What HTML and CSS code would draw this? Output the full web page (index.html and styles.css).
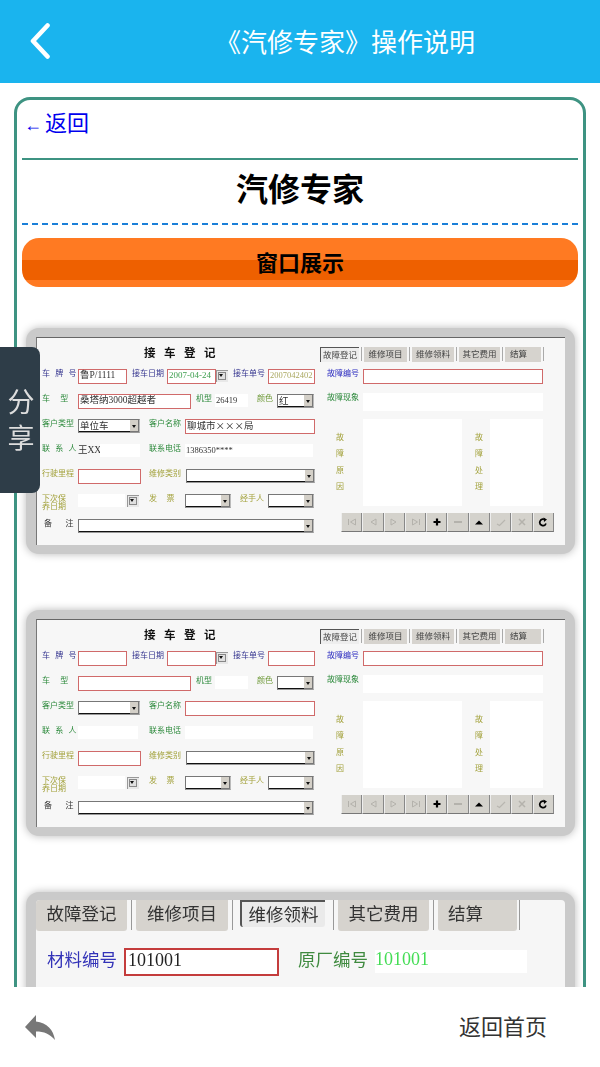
FILE: index.html
```html
<!DOCTYPE html>
<html lang="zh-CN">
<head>
<meta charset="utf-8">
<title>《汽修专家》操作说明</title>
<link rel="stylesheet" href="styles.css">
</head>
<body>
<svg class="defs" width="0" height="0" aria-hidden="true">
  <symbol id="i-first" viewBox="0 0 10 10"><path d="M1.500 2v6M8.500 2L3.500 5l5 3z" fill="none" stroke="#b4b2ac"/></symbol>
  <symbol id="i-prev" viewBox="0 0 10 10"><path d="M8 2L3 5l5 3z" fill="none" stroke="#b4b2ac"/></symbol>
  <symbol id="i-next" viewBox="0 0 10 10"><path d="M2 2l5 3-5 3z" fill="none" stroke="#b4b2ac"/></symbol>
  <symbol id="i-last" viewBox="0 0 10 10"><path d="M8.500 2v6M1.500 2l5 3-5 3z" fill="none" stroke="#b4b2ac"/></symbol>
  <symbol id="i-plus" viewBox="0 0 10 10"><path d="M5 1.500v7M1.500 5h7" stroke="#000" stroke-width="2.200"/></symbol>
  <symbol id="i-minus" viewBox="0 0 10 10"><path d="M1 5h8" stroke="#b4b2ac" stroke-width="2"/></symbol>
  <symbol id="i-up" viewBox="0 0 10 10"><path d="M1 7.500L5 3.500l4 4z" fill="#000"/></symbol>
  <symbol id="i-check" viewBox="0 0 10 10"><path d="M1 7l2.500 1.500L9 3" fill="none" stroke="#b8b6b0" stroke-width="1.200"/></symbol>
  <symbol id="i-x" viewBox="0 0 10 10"><path d="M2 2l6 6M8 2L2 8" stroke="#b4b2ac" stroke-width="1.500"/></symbol>
  <symbol id="i-redo" viewBox="0 0 10 10"><path d="M8 6.500A3.200 3.200 0 1 1 6 2.300" fill="none" stroke="#000" stroke-width="1.700"/><path d="M5.500 .5L9 2.500 6 5z" fill="#000"/></symbol>
</svg>

<div class="app">
  <header class="topbar">
    <svg class="back" viewBox="0 0 20 36" width="20" height="36"><path d="M17.500 2.500L3 18l14.500 15.500" fill="none" stroke="#fff" stroke-width="4.600" stroke-linecap="round" stroke-linejoin="round"/></svg>
    <h1 class="page-title">《汽修专家》操作说明</h1>
  </header>

  <main class="content">
    <div class="card">
      <a class="back-link" href="#"><span class="arrow">←</span>返回</a>
      <h2 class="doc-title">汽修专家</h2>
      <div class="section-btn">窗口展示</div>

      <div class="shot">
        <div class="form">
          <div class="left">
            <div class="form-title">接车登记</div>
            <div class="frow">
              <span class="lab navy w36 ws3">车 牌 号</span>
              <span class="inp w49">鲁P/1111</span>
              <span class="lab navy w40 pl5">接车日期</span>
              <span class="inp w49 val-date">2007-04-24</span>
              <span class="dbtn"><i></i></span>
              <span class="lab navy w40 pl5">接车单号</span>
              <span class="inp w47 val-no">2007042402</span>
            </div>
            <div class="frow">
              <span class="lab green w36 ws8">车 型</span>
              <span class="inp w113">桑塔纳3000超越者</span>
              <span class="lab green w24 pl5">机型</span>
              <span class="box w33">26419</span>
              <span class="lab olive-green w29 pl9">颜色</span>
              <span class="sel w37"><b>红</b><i></i></span>
            </div>
            <div class="frow">
              <span class="lab green w36">客户类型</span>
              <span class="sel w62"><b>单位车</b><i></i></span>
              <span class="lab green w45 pl9">客户名称</span>
              <span class="inp w130 cjk">聊城市×××局</span>
            </div>
            <div class="frow">
              <span class="lab green w36 ws3">联 系 人</span>
              <span class="plain w22">王XX</span>
              <span class="box w40"></span>
              <span class="lab green w45 pl9">联系电话</span>
              <span class="box w128">1386350****</span>
            </div>
            <div class="frow">
              <span class="lab olive w36">行驶里程</span>
              <span class="inp w63"></span>
              <span class="lab olive w45 pl8">维修类别</span>
              <span class="sel w129"><b></b><i></i></span>
            </div>
            <div class="frow">
              <span class="lab olive w36 two">下次保<br>养日期</span>
              <span class="box w47"></span>
              <span class="dbtn gap2"><i></i></span>
              <span class="lab olive w46 pl10 ws7">发 票</span>
              <span class="sel w46"><b></b><i></i></span>
              <span class="lab olive w37 pl9">经手人</span>
              <span class="sel w46"><b></b><i></i></span>
            </div>
            <div class="frow">
              <span class="lab dark w36 pl2 ws11">备 注</span>
              <span class="sel w236"><b></b><i></i></span>
            </div>
          </div>
          <div class="right">
            <div class="tabs">
              <span class="tab tab-on w39">故障登记</span><span class="sep"></span>
              <span class="tab w43">维修项目</span><span class="sep"></span>
              <span class="tab w42">维修领料</span><span class="sep"></span>
              <span class="tab w41">其它费用</span><span class="sep"></span>
              <span class="tab tab-left w36">结算</span><span class="sep"></span>
            </div>
            <div class="rrow">
              <span class="lab blue w43 pl7">故障编号</span>
              <span class="inp w180"></span>
            </div>
            <div class="rrow">
              <span class="lab green w43 pl7">故障现象</span>
              <span class="box w180 h18"></span>
            </div>
            <div class="rrow">
              <span class="vlab w43"><span>故</span><span>障</span><span>原</span><span>因</span></span>
              <span class="box w99 h87"></span>
              <span class="vlab w28 shift"><span>故</span><span>障</span><span>处</span><span>理</span></span>
              <span class="box w53 h87"></span>
            </div>
            <div class="toolbar">
              <span class="tool"><svg width="10" height="10"><use href="#i-first"/></svg></span>
              <span class="tool"><svg width="10" height="10"><use href="#i-prev"/></svg></span>
              <span class="tool"><svg width="10" height="10"><use href="#i-next"/></svg></span>
              <span class="tool"><svg width="10" height="10"><use href="#i-last"/></svg></span>
              <span class="tool"><svg width="10" height="10"><use href="#i-plus"/></svg></span>
              <span class="tool"><svg width="10" height="10"><use href="#i-minus"/></svg></span>
              <span class="tool"><svg width="10" height="10"><use href="#i-up"/></svg></span>
              <span class="tool"><svg width="10" height="10"><use href="#i-check"/></svg></span>
              <span class="tool"><svg width="10" height="10"><use href="#i-x"/></svg></span>
              <span class="tool"><svg width="10" height="10"><use href="#i-redo"/></svg></span>
            </div>
          </div>
        </div>
      </div>

      <div class="shot">
        <div class="form">
          <div class="left">
            <div class="form-title">接车登记</div>
            <div class="frow">
              <span class="lab navy w36 ws3">车 牌 号</span>
              <span class="inp w49"></span>
              <span class="lab navy w40 pl5">接车日期</span>
              <span class="inp w49"></span>
              <span class="dbtn"><i></i></span>
              <span class="lab navy w40 pl5">接车单号</span>
              <span class="inp w47"></span>
            </div>
            <div class="frow">
              <span class="lab green w36 ws8">车 型</span>
              <span class="inp w113"></span>
              <span class="lab green w24 pl5">机型</span>
              <span class="box w33"></span>
              <span class="lab olive-green w29 pl9">颜色</span>
              <span class="sel w37"><b></b><i></i></span>
            </div>
            <div class="frow">
              <span class="lab green w36">客户类型</span>
              <span class="sel w62"><b></b><i></i></span>
              <span class="lab green w45 pl9">客户名称</span>
              <span class="inp w130"></span>
            </div>
            <div class="frow">
              <span class="lab green w36 ws3">联 系 人</span>
              <span class="box w60"></span>
              <span class="lab green w47 pl11">联系电话</span>
              <span class="box w128"></span>
            </div>
            <div class="frow">
              <span class="lab olive w36">行驶里程</span>
              <span class="inp w63"></span>
              <span class="lab olive w45 pl8">维修类别</span>
              <span class="sel w129"><b></b><i></i></span>
            </div>
            <div class="frow">
              <span class="lab olive w36 two">下次保<br>养日期</span>
              <span class="box w47"></span>
              <span class="dbtn gap2"><i></i></span>
              <span class="lab olive w46 pl10 ws7">发 票</span>
              <span class="sel w46"><b></b><i></i></span>
              <span class="lab olive w37 pl9">经手人</span>
              <span class="sel w46"><b></b><i></i></span>
            </div>
            <div class="frow">
              <span class="lab dark w36 pl2 ws11">备 注</span>
              <span class="sel w236"><b></b><i></i></span>
            </div>
          </div>
          <div class="right">
            <div class="tabs">
              <span class="tab tab-on w39">故障登记</span><span class="sep"></span>
              <span class="tab w43">维修项目</span><span class="sep"></span>
              <span class="tab w42">维修领料</span><span class="sep"></span>
              <span class="tab w41">其它费用</span><span class="sep"></span>
              <span class="tab tab-left w36">结算</span><span class="sep"></span>
            </div>
            <div class="rrow">
              <span class="lab blue w43 pl7">故障编号</span>
              <span class="inp w180"></span>
            </div>
            <div class="rrow">
              <span class="lab green w43 pl7">故障现象</span>
              <span class="box w180 h18"></span>
            </div>
            <div class="rrow">
              <span class="vlab w43"><span>故</span><span>障</span><span>原</span><span>因</span></span>
              <span class="box w99 h87"></span>
              <span class="vlab w28 shift"><span>故</span><span>障</span><span>处</span><span>理</span></span>
              <span class="box w53 h87"></span>
            </div>
            <div class="toolbar">
              <span class="tool"><svg width="10" height="10"><use href="#i-first"/></svg></span>
              <span class="tool"><svg width="10" height="10"><use href="#i-prev"/></svg></span>
              <span class="tool"><svg width="10" height="10"><use href="#i-next"/></svg></span>
              <span class="tool"><svg width="10" height="10"><use href="#i-last"/></svg></span>
              <span class="tool"><svg width="10" height="10"><use href="#i-plus"/></svg></span>
              <span class="tool"><svg width="10" height="10"><use href="#i-minus"/></svg></span>
              <span class="tool"><svg width="10" height="10"><use href="#i-up"/></svg></span>
              <span class="tool"><svg width="10" height="10"><use href="#i-check"/></svg></span>
              <span class="tool"><svg width="10" height="10"><use href="#i-x"/></svg></span>
              <span class="tool"><svg width="10" height="10"><use href="#i-redo"/></svg></span>
            </div>
          </div>
        </div>
      </div>

      <div class="shot shot-zoomed">
        <div class="zform">
          <div class="ztabs">
            <span class="ztab w91">故障登记</span><span class="zsep"></span>
            <span class="ztab w92">维修项目</span><span class="zsep"></span>
            <span class="ztab ztab-on">维修领料</span><span class="zsep"></span>
            <span class="ztab w91">其它费用</span><span class="zsep"></span>
            <span class="ztab ztab-last">结算</span><span class="zsep"></span>
          </div>
          <div class="zrow">
            <span class="zlab zlab-blue">材料编号</span>
            <span class="zinp">101001</span>
            <span class="zlab zlab-green">原厂编号</span>
            <span class="zval">101001</span>
          </div>
        </div>
      </div>
    </div>
  </main>

  <footer class="footbar">
    <svg class="reply" viewBox="0 0 30 25" width="30" height="25"><path d="M0 12L11 0v6.500C22 7.500 28.500 15 30 25 25 19 19 16.500 11 16.500V23z" fill="#777"/></svg>
    <a class="home-link" href="#">返回首页</a>
  </footer>

  <aside class="share"><span>分</span><span>享</span></aside>
</div>
</body>
</html>
```

FILE: styles.css
```css
* { box-sizing: border-box; }
html, body { margin: 0; padding: 0; }
body {
  font-family: "Liberation Sans", "Noto Sans CJK SC", sans-serif;
  background: #fff;
}
.defs { position: absolute; }
.app {
  position: relative;
  width: 600px;
  height: 1067px;
  display: flex;
  flex-direction: column;
  overflow: hidden;
}

/* top bar */
.topbar {
  flex: 0 0 83px;
  background: #1ab4ee;
  display: flex;
  align-items: center;
  padding-left: 30px;
}
.back { flex: none; margin-top: -1px; }
.page-title {
  margin: -2px 0 0 165px;
  font-size: 26px;
  font-weight: 400;
  color: #fff;
  white-space: nowrap;
}

/* scrolling content */
.content {
  flex: 1;
  min-height: 0;
  overflow: hidden;
  padding: 14px 14px 0;
}
.card {
  border: 3px solid #3e9382;
  border-radius: 16px;
  padding: 0 5px 40px;
  height: 1000px;
}
.back-link {
  display: block;
  height: 58px;
  padding: 8px 0 0 2px;
  font-size: 22px;
  line-height: 32px;
  color: #0000ee;
  text-decoration: none;
}
.arrow { font-size: 18px; margin-right: 3px; }
.doc-title {
  margin: 0;
  height: 67px;
  border-top: 2px solid #3e9382;
  border-bottom: 2px dashed #1a7fd8;
  font-size: 32px;
  font-weight: 700;
  line-height: 60px;
  text-align: center;
  color: #000;
}
.section-btn {
  margin-top: 13px;
  height: 49px;
  border-radius: 17px;
  background: linear-gradient(#ff7a22 0, #ff7a22 22px, #ee6000 22px, #ee6000 42px, #ff7a22 42px);
  font-size: 22px;
  font-weight: 700;
  line-height: 51px;
  text-align: center;
  color: #000;
}

/* screenshot frames */
.shot {
  margin: 41px 3px 56px 4px;
  height: 226px;
  padding: 9px 10px 9px 10px;
  background: #cacaca;
  border-radius: 13px;
  box-shadow: 0 0 9px rgba(0, 0, 0, .28);
}
.form {
  height: 208px;
  display: flex;
  background: #f7f7f7;
  border-top: 1px solid #666;
  border-left: 1px solid #777;
  filter: blur(.35px);
}
.left { flex: 0 0 283px; padding-left: 5px; }
.right {
  flex: 1;
  display: grid;
  grid-template-rows: 31px 24px 26px 94px 19px;
}
.form-title {
  height: 31px;
  padding: 8px 0 0 6px;
  font-size: 11.500px;
  font-weight: 700;
  line-height: 14px;
  letter-spacing: 8.500px;
  text-align: center;
  color: #111;
}
.frow {
  display: flex;
  align-items: flex-start;
  height: 25px;
}
.rrow { display: flex; align-items: flex-start; }

.lab {
  flex: none;
  font-size: 8px;
  line-height: 10px;
  white-space: nowrap;
}
.two { line-height: 8px; margin-top: 1px; }
.ws3 { word-spacing: 3px; }
.ws7 { word-spacing: 7.300px; }
.ws8 { word-spacing: 8px; }
.ws11 { word-spacing: 11.300px; }
.navy { color: #35358f; }
.green { color: #2d8a3c; }
.olive { color: #a3a23c; }
.olive-green { color: #6f9a3a; }
.blue { color: #2b2bc0; }
.dark { color: #333; }

.inp {
  flex: none;
  height: 15px;
  padding-left: 1px;
  background: #fff;
  border: 1px solid #d06a6a;
  font-family: "Liberation Serif", "Noto Sans CJK SC", serif;
  font-size: 9.500px;
  line-height: 11px;
  color: #333;
  white-space: nowrap;
}
.cjk { font-family: "Noto Sans CJK SC", sans-serif; }
.val-date { font-size: 9px; color: #3f9f50; }
.val-no { font-size: 8.500px; color: #aaa860; }
.box {
  flex: none;
  height: 13px;
  padding-left: 1px;
  background: #fff;
  font-family: "Liberation Serif", serif;
  font-size: 8.500px;
  line-height: 12px;
  color: #333;
}
.plain {
  flex: none;
  font-family: "Liberation Serif", "Noto Sans CJK SC", serif;
  font-size: 9.500px;
  line-height: 13px;
  color: #333;
  white-space: nowrap;
}
.sel {
  flex: none;
  display: flex;
  height: 14px;
  background: #fff;
  border: 1px solid;
  border-color: #777 #bbb #999 #777;
}
.sel b {
  flex: 1;
  min-width: 0;
  padding-left: 1px;
  border-bottom: 1px solid #111;
  font-family: "Noto Sans CJK SC", sans-serif;
  font-size: 9.500px;
  font-weight: 400;
  line-height: 11px;
  color: #333;
}
.sel i, .dbtn i { display: block; position: relative; }
.sel i {
  flex: 0 0 9px;
  background: #d4d0c8;
  border-right: 1px solid #777;
  border-bottom: 1px solid #777;
}
.sel i::after, .dbtn i::after {
  content: "";
  position: absolute;
  left: 2px;
  top: 5px;
  border: 2px solid transparent;
  border-top: 3px solid #111;
  border-bottom: 0;
}
.dbtn {
  flex: none;
  width: 12px;
  height: 12px;
  margin-top: 1px;
  background: #e8e8e8;
  border-top: 1px solid #999;
  border-left: 1px solid #999;
}
.dbtn i { width: 8px; height: 8px; margin: 1px; background: #e0e0e0; border: 1px solid #888; }
.dbtn i::after { left: 0; top: 1px; }
.gap2 { margin-left: 2px; }

.tabs { display: flex; align-items: flex-start; gap: 2px; padding-top: 9px; }
.tab {
  flex: none;
  height: 15px;
  background: #d6d3ce;
  font-size: 8.500px;
  line-height: 15px;
  text-align: center;
  color: #444;
  white-space: nowrap;
}
.tab-on { background: #eee; border-top: 1px solid #555; border-left: 1px solid #555; line-height: 14px; }
.tab-left { text-align: left; padding-left: 5px; }
.sep { flex: 0 0 1px; height: 14px; background: #aaa; }

.vlab {
  flex: none;
  display: flex;
  flex-direction: column;
  gap: 6.300px;
  padding-top: 14px;
  padding-left: 16px;
  font-size: 8px;
  line-height: 10px;
  color: #a3a23c;
}
.shift { padding-left: 13px; }

.toolbar { display: flex; padding-left: 21px; }
.tool {
  flex: none;
  width: 21.300px;
  height: 19px;
  display: flex;
  align-items: center;
  justify-content: center;
  background: #d4d2cc;
  border-right: 1px solid #888;
  border-bottom: 1px solid #777;
  border-left: 1px solid #eee;
}

/* zoomed third screenshot */
.shot-zoomed { margin-bottom: 0; height: 140px; padding-top: 8px; }
.zform {
  height: 130px;
  background: #f6f6f6;
  border-radius: 4px 4px 0 0;
  overflow: hidden;
  filter: blur(.3px);
}
.ztabs { display: flex; align-items: flex-start; gap: 4px; }
.ztab {
  flex: none;
  height: 31px;
  background: #d6d3ce;
  border-radius: 0 0 3px 3px;
  font-size: 17.500px;
  line-height: 29px;
  text-align: center;
  color: #333;
  white-space: nowrap;
}
.ztab-on {
  width: 85px;
  height: 27px;
  margin: 0 4px 0 3px;
  background: #eaeaea;
  border-top: 2px solid #555;
  border-left: 2px solid #555;
  line-height: 27px;
}
.ztab-last { width: 79px; margin-right: -2px; text-align: left; padding-left: 10px; }
.zsep { flex: 0 0 1px; height: 30px; background: #999; }
.zrow { display: flex; align-items: flex-start; padding: 17px 0 0 11px; }
.zlab { flex: none; font-size: 17.500px; line-height: 24px; white-space: nowrap; }
.zlab-blue { width: 77px; color: #3333b8; }
.zlab-green { width: 96px; padding-left: 19px; color: #3f8a3f; }
.zinp {
  flex: none;
  width: 155px;
  height: 28px;
  padding-left: 2px;
  background: #fff;
  border: 2px solid #c43c3c;
  font-family: "Liberation Serif", serif;
  font-size: 18px;
  line-height: 20px;
  color: #222;
}
.zval {
  flex: none;
  width: 152px;
  height: 23px;
  margin-top: 2px;
  background: #fff;
  font-family: "Liberation Serif", serif;
  font-size: 18px;
  line-height: 19px;
  color: #44dd55;
}

/* width helpers for the mock form */
.w22 { width: 22px; } .w24 { width: 24px; } .w28 { width: 28px; } .w29 { width: 29px; }
.w33 { width: 33px; } .w36 { width: 36px; } .w37 { width: 37px; } .w39 { width: 39px; }
.w40 { width: 40px; } .w41 { width: 41px; } .w42 { width: 42px; } .w43 { width: 43px; }
.w45 { width: 45px; } .w46 { width: 46px; } .w47 { width: 47px; } .w49 { width: 49px; }
.w53 { width: 53px; } .w60 { width: 60px; } .w62 { width: 62px; } .w63 { width: 63px; }
.w91 { width: 91px; } .w92 { width: 92px; } .w99 { width: 99px; } .w113 { width: 113px; }
.w128 { width: 128px; } .w129 { width: 129px; } .w130 { width: 130px; } .w180 { width: 180px; }
.w236 { width: 236px; }
.pl2 { padding-left: 2px; } .pl5 { padding-left: 5px; } .pl7 { padding-left: 7px; }
.pl8 { padding-left: 8px; } .pl9 { padding-left: 9px; } .pl10 { padding-left: 10px; }
.pl11 { padding-left: 11px; }
.h18 { height: 18px; } .h87 { height: 87px; }

/* bottom bar */
.footbar {
  flex: 0 0 80px;
  position: relative;
  background: #fff;
  display: flex;
  align-items: center;
  justify-content: space-between;
  padding: 0 53px 0 25px;
}
.reply { flex: none; }
.home-link {
  padding-bottom: 4px;
  font-size: 22px;
  color: #333;
  text-decoration: none;
}

/* floating share tab */
.share {
  position: absolute;
  left: 0;
  top: 347px;
  width: 40px;
  height: 146px;
  display: flex;
  flex-direction: column;
  align-items: center;
  justify-content: center;
  gap: 9px;
  padding: 2px 0 0 2px;
  background: #2e3d48;
  border-radius: 0 8px 8px 0;
  font-size: 27px;
  line-height: 27px;
  color: #ddd;
  filter: blur(.3px);
}
```
